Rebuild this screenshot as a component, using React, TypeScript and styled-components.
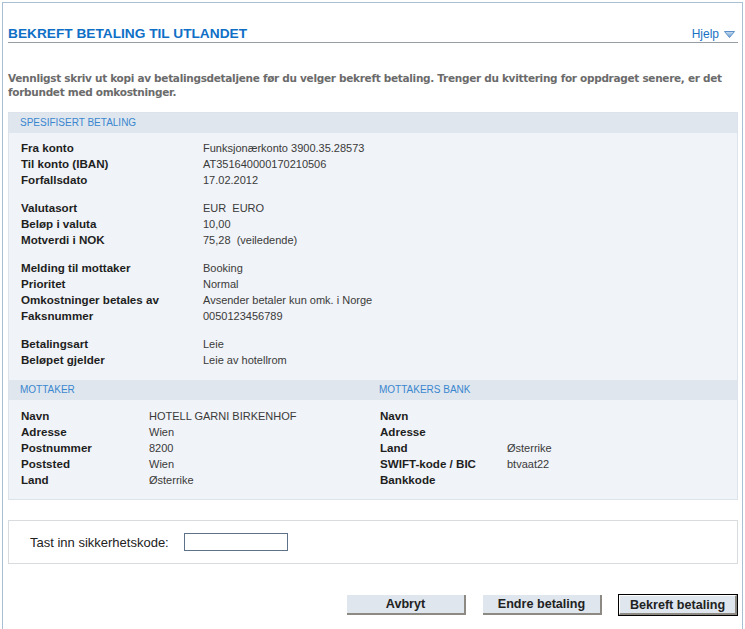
import React from "react";
import styled, { createGlobalStyle } from "styled-components";

const GlobalStyle = createGlobalStyle`
    html, body {
        margin: 0;
        padding: 0;
        background: #ffffff;
    }
    body {
        font-family: "Liberation Sans", Arial, sans-serif;
        font-size: 11px;
        color: #222;
    }
`;

const Frame = styled.div`
    margin: 2px 2px 0 2px;
    border: 1px solid #a9bfd3;
    border-bottom: none;
    padding: 0 4px 14px 5px;
    min-height: 620px;
    box-sizing: border-box;
`;

const TitleBar = styled.div`
    display: flex;
    align-items: center;
    justify-content: space-between;
    height: 16px;
    padding: 23px 0 0 0;
    border-bottom: 1px solid #999ea4;
`;

const Title = styled.h1`
    margin: 0;
    font-size: 13.7px;
    line-height: 16px;
    font-weight: 700;
    color: #0f6fc6;
`;

const Help = styled.a`
    display: flex;
    align-items: center;
    gap: 5px;
    margin-right: 3px;
    font-size: 12px;
    line-height: 16px;
    color: #1a72c4;
    text-decoration: none;
`;

const Intro = styled.p`
    margin: 28px 0 13px 0;
    font-family: "DejaVu Sans", Verdana, sans-serif;
    font-size: 10.5px;
    letter-spacing: -0.3px;
    font-weight: 700;
    line-height: 14px;
    color: #6b6b6b;
    white-space: nowrap;
`;

const Panel = styled.div`
    background: #f0f3f7;
    border: 1px solid #dde3ea;
`;

const PanelHeader = styled.div`
    height: 20px;
    line-height: 20px;
    padding-left: 11px;
    background: #dfe6ee;
    color: #3a86cf;
    font-size: 10px;
    text-transform: uppercase;
`;

const Section = styled.div<{ $top: number; $bottom: number }>`
    padding: ${(p) => p.$top}px 12px ${(p) => p.$bottom}px 12px;
`;

const Group = styled.div`
    & + & {
        margin-top: 12px;
    }
`;

const Row = styled.div<{ $labelWidth: number }>`
    display: grid;
    grid-template-columns: ${(p) => p.$labelWidth}px 1fr;
    line-height: 16px;
    height: 16px;
`;

const Label = styled.span`
    font-size: 11.6px;
    font-weight: 700;
    color: #1e1e1e;
    white-space: nowrap;
`;

const Value = styled.span`
    color: #3a3a3a;
    white-space: pre;
`;

const Columns = styled.div`
    display: grid;
    grid-template-columns: 359px 1fr;
`;

const Column = styled.div``;

const SecurityBox = styled.div`
    display: flex;
    align-items: center;
    margin-top: 20px;
    height: 44px;
    padding-left: 21px;
    border: 1px solid #d9dcdf;
    box-sizing: border-box;
`;

const SecurityLabel = styled.label`
    font-size: 13px;
    color: #222;
    width: 154px;
`;

const CodeInput = styled.input`
    width: 104px;
    height: 18px;
    box-sizing: border-box;
    border: 1px solid #5d7188;
    padding: 0 3px;
    font-size: 11px;
`;

const ButtonRow = styled.div`
    display: flex;
    justify-content: flex-end;
    gap: 17px;
    margin-top: 31px;
    padding-right: 1px;
`;

const Button = styled.button<{ $primary?: boolean }>`
    width: ${(p) => (p.$primary ? 118 : 119)}px;
    height: 20px;
    box-sizing: border-box;
    padding: 0;
    font-family: "Liberation Sans", Arial, sans-serif;
    font-size: 12.6px;
    font-weight: 700;
    color: #222;
    background: #dfe6ee;
    border: none;
    border-right: 2px solid #8d8a84;
    border-bottom: 2px solid #8d8a84;
    ${(p) =>
        p.$primary &&
        `
        outline: 1px solid #000;
        outline-offset: 0;
        border-left: 1px solid #fff;
        border-top: 1px solid #fff;
    `}
`;

type Pair = [string, string];

const topGroups: Pair[][] = [
    [
        ["Fra konto", "Funksjonærkonto 3900.35.28573"],
        ["Til konto (IBAN)", "AT351640000170210506"],
        ["Forfallsdato", "17.02.2012"],
    ],
    [
        ["Valutasort", "EUR  EURO"],
        ["Beløp i valuta", "10,00"],
        ["Motverdi i NOK", "75,28  (veiledende)"],
    ],
    [
        ["Melding til mottaker", "Booking"],
        ["Prioritet", "Normal"],
        ["Omkostninger betales av", "Avsender betaler kun omk. i Norge"],
        ["Faksnummer", "0050123456789"],
    ],
    [
        ["Betalingsart", "Leie"],
        ["Beløpet gjelder", "Leie av hotellrom"],
    ],
];

const recipient: Pair[] = [
    ["Navn", "HOTELL GARNI BIRKENHOF"],
    ["Adresse", "Wien"],
    ["Postnummer", "8200"],
    ["Poststed", "Wien"],
    ["Land", "Østerrike"],
];

const bank: Pair[] = [
    ["Navn", ""],
    ["Adresse", ""],
    ["Land", "Østerrike"],
    ["SWIFT-kode / BIC", "btvaat22"],
    ["Bankkode", ""],
];

const Rows = ({ items, labelWidth }: { items: Pair[]; labelWidth: number }) => (
    <>
        {items.map(([label, value]) => (
            <Row key={label} $labelWidth={labelWidth}>
                <Label>{label}</Label>
                <Value>{value}</Value>
            </Row>
        ))}
    </>
);

export default function App() {
    return (
        <>
            <GlobalStyle />
            <Frame>
                <TitleBar>
                    <Title>BEKREFT BETALING TIL UTLANDET</Title>
                    <Help href="#">
                        Hjelp
                        <svg width="11" height="7" viewBox="0 0 11 7">
                            <defs>
                                <linearGradient id="tri" x1="0" y1="0" x2="0" y2="1">
                                    <stop offset="0" stopColor="#c9dcf0" />
                                    <stop offset="1" stopColor="#6f9fd4" />
                                </linearGradient>
                            </defs>
                            <path d="M0.5 0.5 L10.5 0.5 L5.5 6.5 Z" fill="url(#tri)" stroke="#5b8fc9" strokeWidth="1" strokeLinejoin="round" />
                        </svg>
                    </Help>
                </TitleBar>

                <Intro>
                    Vennligst skriv ut kopi av betalingsdetaljene før du velger bekreft betaling. Trenger du kvittering for oppdraget senere, er det
                    <br />
                    forbundet med omkostninger.
                </Intro>

                <Panel>
                    <PanelHeader>Spesifisert betaling</PanelHeader>
                    <Section $top={7} $bottom={12}>
                        {topGroups.map((group, i) => (
                            <Group key={i}>
                                <Rows items={group} labelWidth={182} />
                            </Group>
                        ))}
                    </Section>
                    <Columns>
                        <Column>
                            <PanelHeader>Mottaker</PanelHeader>
                            <Section $top={8} $bottom={11}>
                                <Rows items={recipient} labelWidth={128} />
                            </Section>
                        </Column>
                        <Column>
                            <PanelHeader>Mottakers bank</PanelHeader>
                            <Section $top={8} $bottom={11}>
                                <Rows items={bank} labelWidth={127} />
                            </Section>
                        </Column>
                    </Columns>
                </Panel>

                <SecurityBox>
                    <SecurityLabel htmlFor="kode">Tast inn sikkerhetskode:</SecurityLabel>
                    <CodeInput id="kode" type="text" />
                </SecurityBox>

                <ButtonRow>
                    <Button>Avbryt</Button>
                    <Button>Endre betaling</Button>
                    <Button $primary>Bekreft betaling</Button>
                </ButtonRow>
            </Frame>
        </>
    );
}
